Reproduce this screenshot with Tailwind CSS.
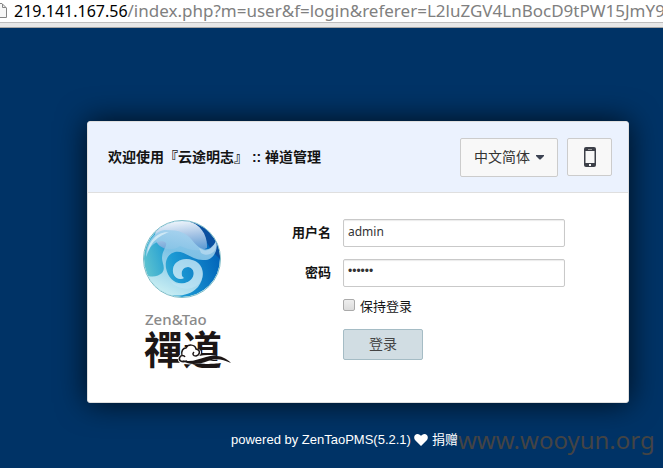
<!DOCTYPE html>
<html lang="zh-CN">
<head>
<meta charset="utf-8">
<title>用户登录</title>
<script src="https://cdn.jsdelivr.net/npm/@tailwindcss/browser@4"></script>
</head>
<body class="flex min-h-screen flex-col overflow-x-hidden bg-[#003366] font-['Liberation_Sans','Noto_Sans_CJK_SC',sans-serif] text-[13px] text-[#141414]">
  <div class="flex h-7 shrink-0 flex-col overflow-hidden border-b border-[#a8a8a8] bg-[#e8e8e8]">
    <div class="flex h-[23px] items-center gap-[7px] border-b border-[#bebebe] bg-white pb-px font-['Noto_Sans',sans-serif] text-[17px] leading-5 whitespace-nowrap text-[#808080]">
      <svg class="h-5 w-[7px] shrink-0" viewBox="0 0 7 20" fill="none" stroke="#858585" aria-hidden="true"><path d="M0 2.5H2L6.500 7V16.500H0" fill="#f7f7f7"/><path d="M2.500 3V6.500H6"/></svg>
      <p><span class="text-[16px] text-black">219.141.167.56</span>/index.php?m=user&amp;f=login&amp;referer=L2luZGV4LnBocD9tPW15JmY9a</p>
    </div>
  </div>

  <main class="pt-[93px] pr-[34px] pb-2 pl-[87px]">
    <section class="rounded-[3px] border border-[#dfdfdf] bg-white shadow-[0_0_30px_rgba(0,0,0,0.75)]">
      <header class="flex h-[71px] items-center justify-between rounded-t-[2px] border-b border-[#dfdfdf] bg-[#ebf2fe] pr-4 pl-5">
        <h1 class="text-[14px] leading-5 font-bold">欢迎使用『云途明志』 :: 禅道管理</h1>
        <div class="flex items-start gap-[9px]">
          <button type="button" class="flex h-[39px] w-[98px] items-center justify-center gap-[6px] rounded-[2px] border border-[#cccccc] bg-[#f8f8f8] text-[14px] text-[#333333]">中文简体
            <svg class="h-[5px] w-2" viewBox="0 0 8 5" fill="#3c4353" aria-hidden="true"><path d="M0 0H8V1L4.500 4.500H3.500L0 1Z"/></svg>
          </button>
          <button type="button" aria-label="手机访问" class="flex h-[38px] w-[45px] items-center justify-center rounded-[2px] border border-[#cccccc] bg-[#f8f8f8]">
            <svg class="h-5 w-3" viewBox="0 0 12 20" aria-hidden="true"><rect width="12" height="20" rx="2" fill="#3d4049"/><rect x="1.500" y="4" width="9" height="12" fill="#f8f8f8"/><path d="M4 2.500H8" stroke="#999"/><rect x="5" y="17" width="2" height="2" fill="#f8f8f8"/></svg>
          </button>
        </div>
      </header>

      <div class="flex h-[209px] pt-[26px]">
        <div class="w-[155px] shrink-0 pl-[54px]">
          <svg class="h-20 w-20" viewBox="0 0 80 80" role="img" aria-label="Zen&amp;Tao">
            <defs>
              <linearGradient id="sea" x1="0" y1=".7" x2="1" y2=".4"><stop offset="0" stop-color="#62c6cf"/><stop offset=".4" stop-color="#1c9ad4"/><stop offset="1" stop-color="#0062b8"/></linearGradient>
              <linearGradient id="sky" x1=".4" y1="0" x2=".6" y2="1"><stop offset="0" stop-color="#f4f9fd"/><stop offset=".5" stop-color="#a9c6e6"/><stop offset="1" stop-color="#5f9cd4"/></linearGradient>
              <linearGradient id="foam" x1=".7" y1="0" x2=".3" y2="1"><stop offset="0" stop-color="#a8d3f0"/><stop offset=".4" stop-color="#8ac8e8"/><stop offset="1" stop-color="#dcf7f8"/></linearGradient>
              <clipPath id="ball"><circle cx="40" cy="40" r="38"/></clipPath>
            </defs>
            <circle cx="40" cy="40" r="38.500" fill="#d3efef" stroke="#7fbcc8"/>
            <g clip-path="url(#ball)">
              <circle cx="40" cy="40" r="38" fill="url(#sea)"/>
              <path d="M48 2C64 5 78 18 78 40L70 32L64 22Z" fill="#0a4f9f"/>
              <path d="M13 18C12 6 28 1 40 1C56 2 66 14 65 29C56 34 46 30 38 27C28 34 14 29 13 18Z" fill="url(#sky)"/>
              <path d="M4 38C4 22 14 11 24 11C38 11 44 14 50 21C56 29 66 37 74 22C77 33 70 42 61 41C50 41 42 31 33 33C25 35 23 43 24 49C26 59 33 66 43 64C54 61 54 49 46 48C39 48 38 57 42 59C36 62 30 57 31 50C32 42 42 38 50 41C62 44 64 58 56 68C46 79 31 77 22 75C10 69 5 62 4 56C10 59 17 57 20 54C24 49 20 44 20 39C20 32 25 28 24 24C21 20 12 23 8 29Z" fill="url(#foam)" opacity=".88"/>
              <path d="M31 50C32 42 42 38 50 41C62 44 64 58 56 66C48 72 33 71 27 60C32 66 38 66 43 64C54 61 54 49 46 48C39 48 38 57 42 59C36 62 30 57 31 50Z" fill="#c3e6f5" opacity=".55"/>
              <path d="M5 34C7 20 16 13 27 13C22 15 14 19 10 25Z" fill="#e4f3fa" opacity=".7"/>
              <path d="M57 29C64 34 70 31 74 22C77 33 66 39 59 34Z" fill="#d4e8f6" opacity=".5"/>
            </g>
          </svg>
          <div class="relative mt-3 w-[90px]">
            <p class="pl-[3px] font-['Noto_Sans',sans-serif] text-[15px] leading-4 font-medium text-[#8a8a8a]">Zen&amp;Tao</p>
            <p class="pt-[2px] pl-[2px] font-['Noto_Sans_CJK_TC',sans-serif] text-[39px] leading-9 font-bold whitespace-nowrap text-[#1c1616]">禪道</p>
            <svg class="absolute top-[30px] left-[35px] h-6 w-[55px]" viewBox="0 0 55 24" aria-hidden="true"><path d="M3 22C0 20 0 15 4 13C4 9 5 6 10 6C11 2 19 2 20 8C25 8 25 13 22 15C31 13 43 13 54 23C45 17 37 18 29 21C20 24 8 24 3 22Z" fill="white"/><path d="M10 20C4 22 1 19 3 16C4 14 7 14 8 16M5 14C4 10 6 7 9 7C11 3 18 3 19 8C24 9 23 14 19 15C16 15 15 13 17 11" fill="none" stroke="#1c1616" stroke-width="1.500"/><path d="M5 19C13 22 22 18 29 16C40 13 48 16 54 22C45 18 39 17 31 20C21 24 10 24 5 19Z" fill="#1c1616"/></svg>
          </div>
        </div>

        <form class="flex min-w-0 grow flex-col pr-[63px]" onsubmit="return false">
          <div class="mb-3 flex h-7 items-center gap-3">
            <label for="account" class="w-[88px] shrink-0 text-right font-bold">用户名</label>
            <input id="account" type="text" value="admin" class="h-7 w-full min-w-0 rounded-[2px] border border-[#c9c9c9] bg-white px-1 pb-1 font-['Noto_Sans',sans-serif] text-[12px] text-[#333333] shadow-[inset_0_1px_1px_rgba(0,0,0,0.08)]">
          </div>
          <div class="mb-3 flex h-7 items-center gap-3">
            <label for="password" class="w-[88px] shrink-0 text-right font-bold">密码</label>
            <input id="password" type="password" value="123456" class="h-7 w-full min-w-0 rounded-[2px] border border-[#c9c9c9] bg-white px-1 pb-1 font-['Liberation_Sans',sans-serif] text-[12px] text-[#333333] shadow-[inset_0_1px_1px_rgba(0,0,0,0.08)]">
          </div>
          <div class="flex h-4 items-center gap-[5px] pl-[100px]">
            <input id="keep" type="checkbox" class="mb-1 h-3 w-3 appearance-none rounded-[2px] border border-[#aaaaaa] bg-linear-to-b from-[#eeeeee] to-[#dcdcdc]">
            <label for="keep">保持登录</label>
          </div>
          <div class="mt-[14px] pl-[100px]">
            <button type="submit" class="h-[31px] w-20 rounded-[2px] border border-[#a5bcc5] bg-[#d1dde3] text-[14px] text-[#444444]">登录</button>
          </div>
        </form>
      </div>
    </section>
  </main>

  <footer class="flex h-14 items-center pt-[2px] pl-[231px] leading-5 whitespace-nowrap text-white">
    <p class="pr-[3px]">powered by <a href="#">ZenTaoPMS(5.2.1)</a></p>
    <a href="#" class="flex items-center gap-1">
      <svg class="h-3 w-[14px]" viewBox="0 0 14 12" fill="white" aria-hidden="true"><path d="M7 12L1 6C-1 3 1 0 3.500 0C5 0 6.500 1 7 2C7.500 1 9 0 10.500 0C13 0 15 3 13 6Z"/></svg>捐赠
    </a>
    <span class="font-['Noto_Sans',sans-serif] text-[24px] text-[#444444]">www.wooyun.org</span>
  </footer>
</body>
</html>
